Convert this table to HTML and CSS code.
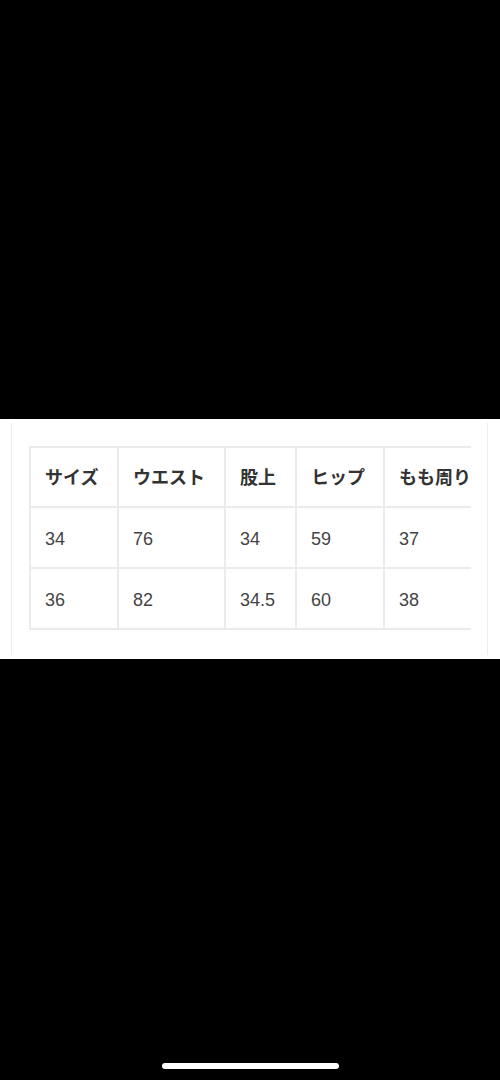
FILE: index.html
```html
<!DOCTYPE html>
<html lang="ja">
<head>
<meta charset="utf-8">
<title>サイズ表</title>
<link rel="stylesheet" href="styles.css">
</head>
<body>
<div class="screen">
  <div class="top-space"></div>
  <section class="panel">
    <div class="frame">
      <div class="scroller">
        <table class="size-table">
          <colgroup>
            <col class="c1"><col class="c2"><col class="c3"><col class="c4"><col class="c5">
          </colgroup>
          <thead>
            <tr><th>サイズ</th><th>ウエスト</th><th>股上</th><th>ヒップ</th><th>もも周り</th></tr>
          </thead>
          <tbody>
            <tr><td>34</td><td>76</td><td>34</td><td>59</td><td>37</td></tr>
            <tr><td>36</td><td>82</td><td>34.5</td><td>60</td><td>38</td></tr>
          </tbody>
        </table>
      </div>
    </div>
  </section>
  <div class="bottom-space">
    <div class="home-indicator"></div>
  </div>
</div>
</body>
</html>
```
FILE: styles.css
```css
html, body {
  margin: 0;
  padding: 0;
  background: #000;
}
.screen {
  width: 500px;
  height: 1080px;
  display: flex;
  flex-direction: column;
  font-family: "Liberation Sans", "Noto Sans CJK JP", sans-serif;
}
.top-space {
  height: 419px;
  flex: none;
}
.panel {
  flex: none;
  height: 240px;
  box-sizing: border-box;
  background: #fff;
  padding: 4px 12px 4px 11px;
}
.frame {
  height: 100%;
  box-sizing: border-box;
  border-left: 1px solid #ececec;
  border-right: 1px solid #ececec;
  padding: 23px 16px 0 17px;
}
.scroller {
  overflow: hidden;
  width: 100%;
}
.size-table {
  table-layout: fixed;
  border-collapse: separate;
  border-spacing: 0;
  width: 460px;
  border-top: 2px solid #ebebeb;
  border-left: 2px solid #ebebeb;
}
.c1 { width: 88px; }
.c2 { width: 107px; }
.c3 { width: 71px; }
.c4 { width: 88px; }
.c5 { width: 104px; }
.size-table th,
.size-table td {
  box-sizing: border-box;
  border-right: 2px solid #ebebeb;
  border-bottom: 2px solid #ebebeb;
  padding: 0 0 0 14px;
  text-align: left;
  white-space: nowrap;
  font-size: 18px;
}
.size-table th {
  height: 60px;
  padding-bottom: 3px;
  font-family: "Noto Sans CJK JP", sans-serif;
  font-weight: 700;
  color: #333;
}
.size-table td {
  height: 61px;
  padding-top: 4px;
  color: #444;
  font-weight: 400;
}
.bottom-space {
  flex: 1;
  display: flex;
  align-items: flex-end;
  justify-content: center;
  padding-bottom: 11px;
}
.home-indicator {
  width: 177px;
  height: 6px;
  border-radius: 3px;
  background: #fff;
}
```
